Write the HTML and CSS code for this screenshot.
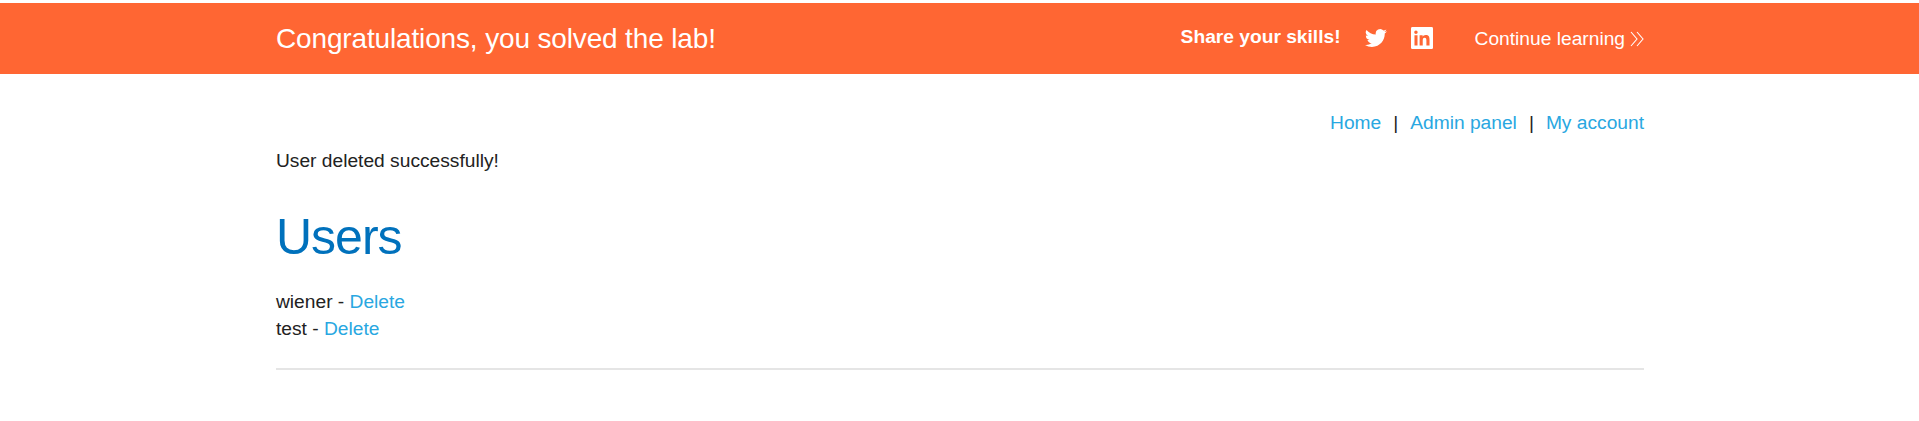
FILE: index.html
```html
<!DOCTYPE html>
<html lang="en">
<head>
<meta charset="utf-8">
<title>Admin panel</title>
<link rel="stylesheet" href="styles.css">
</head>
<body>
<section class="banner">
  <div class="container banner-row">
    <h4 class="banner-title">Congratulations, you solved the lab!</h4>
    <div class="banner-actions">
      <span class="share">Share your skills!</span>
      <svg class="icon twitter" viewBox="0 1 24 22"><path d="M23.95 4.57a10 10 0 0 1-2.82.77 4.96 4.96 0 0 0 2.16-2.72c-.95.55-2 .95-3.13 1.18a4.92 4.92 0 0 0-8.38 4.48C7.69 8.1 4.07 6.13 1.64 3.16a4.92 4.92 0 0 0 1.52 6.57 4.9 4.9 0 0 1-2.23-.61v.06a4.92 4.92 0 0 0 3.95 4.83 5 5 0 0 1-2.21.08 4.94 4.94 0 0 0 4.6 3.42A9.87 9.87 0 0 1 0 19.54a13.99 13.99 0 0 0 7.55 2.21c9.05 0 14-7.5 14-13.98 0-.21 0-.42-.02-.63a9.94 9.94 0 0 0 2.46-2.55z"/></svg>
      <svg class="icon linkedin" viewBox="0 0 24 24"><path fill-rule="evenodd" d="M1.500 0h21A1.500 1.500 0 0 1 24 1.500v21a1.500 1.500 0 0 1-1.500 1.500h-21A1.500 1.500 0 0 1 0 22.500v-21A1.500 1.500 0 0 1 1.500 0zM3.800 9v11.200h3.300V9zM5.400 3.700a1.900 1.900 0 1 0 0 3.800 1.900 1.900 0 0 0 0-3.800zM9.400 9v11.200h3.400v-5.500c0-1.500.3-2.900 2.100-2.900s1.900 1.700 1.900 3v5.400h3.400v-6.100c0-3.100-.7-5.300-4.200-5.300-1.700 0-2.800.9-3.300 1.800V9z"/></svg>
      <a class="continue" href="#">Continue learning<svg class="chevrons" viewBox="0 0 14 16"><path d="M1 1l6 7-6 7M7 1l6 7-6 7"/></svg></a>
    </div>
  </div>
</section>
<main class="container">
  <nav class="nav"><a href="#">Home</a><span>|</span><a href="#">Admin panel</a><span>|</span><a href="#">My account</a></nav>
  <p class="message">User deleted successfully!</p>
  <h1 class="heading">Users</h1>
  <div class="users">
    <div>wiener - <a href="#">Delete</a></div>
    <div>test - <a href="#">Delete</a></div>
  </div>
  <hr class="rule">
</main>
</body>
</html>
```

FILE: styles.css
```css
body { margin: 0; padding-top: 3px; background: #fff; color: #222; font: 19.2px/27px "Liberation Sans", Arial, sans-serif; }
a { color: #29a7e1; text-decoration: none; }
.container { box-sizing: border-box; width: 1369px; margin: 0 auto; padding-left: 1px; }
.banner { height: 71px; background: #ff6633; color: #fff; }
.banner-row { display: flex; justify-content: space-between; height: 71px; align-items: center; }
.banner-title { margin: 0; font-size: 28px; font-weight: 400; letter-spacing: -0.15px; }
.banner-actions { display: flex; align-items: center; }
.share { font-weight: 700; padding-bottom: 4px; }
.icon { width: 22px; height: 22px; padding-bottom: 1px; fill: #fff; }
.twitter { margin-left: 24px; }
.linkedin { margin-left: 24px; }
.continue { margin-left: 42px; color: #fff; display: flex; align-items: center; gap: 5px; }
.chevrons { width: 14px; height: 16px; fill: none; stroke: #fff; stroke-width: 1.1; }
.nav { display: flex; justify-content: flex-end; gap: 12px; padding-top: 35px; }
.message { margin: 11px 0 0; }
.heading { margin: 33px 0 0; font-size: 50px; line-height: 60px; font-weight: 400; letter-spacing: -1px; color: #0071bc; }
.users { margin-top: 21px; }
.rule { margin: 26px 0 0; border: 0; height: 2px; background: #e5e5e5; }
```
